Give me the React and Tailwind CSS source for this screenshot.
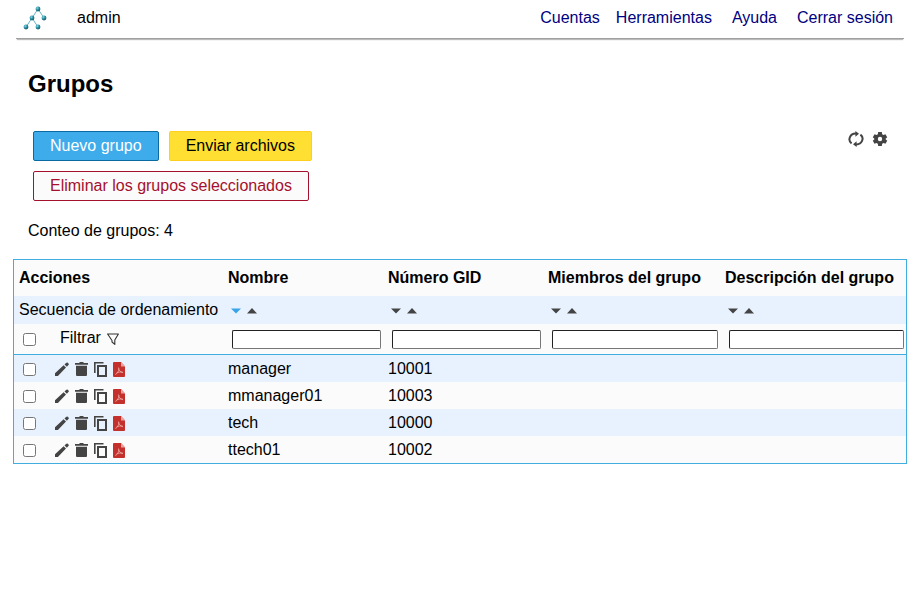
const menu = ['Cuentas', 'Herramientas', 'Ayuda', 'Cerrar sesión'];

const columns = [
  { id: 'cn', label: 'Nombre', active: true },
  { id: 'gid', label: 'Número GID' },
  { id: 'members', label: 'Miembros del grupo' },
  { id: 'description', label: 'Descripción del grupo' },
];

const groups = [
  { name: 'manager', gid: '10001' },
  { name: 'mmanager01', gid: '10003' },
  { name: 'tech', gid: '10000' },
  { name: 'ttech01', gid: '10002' },
];

function Logo() {
  const nodes = [[15, 4], [9, 13], [21, 13], [3, 22], [15, 22]];
  return (
    <svg width="24" height="26" viewBox="0 0 24 26" aria-hidden="true">
      <defs>
        <radialGradient id="ball" cx="0.35" cy="0.3" r="0.8">
          <stop offset="0" stopColor="#8fd8e2" />
          <stop offset="0.45" stopColor="#2d93a5" />
          <stop offset="1" stopColor="#0c4657" />
        </radialGradient>
      </defs>
      <path d="M15 4 3 22M15 4l6 9M9 13l6 9" stroke="#68b3c2" strokeWidth="1" fill="none" />
      {nodes.map(([x, y]) => (
        <circle key={`${x}-${y}`} cx={x} cy={y} r="2.4" fill="url(#ball)" />
      ))}
    </svg>
  );
}

function RefreshIcon() {
  return (
    <svg width="16" height="16" viewBox="0 0 16 16" fill="none" stroke="#444" strokeWidth="2" aria-hidden="true">
      <path d="M3.600 12.400A6.200 5.600 0 0 1 8 2.600" />
      <path d="M12.400 3.600A6.200 5.600 0 0 1 8 13.400" />
      <path d="M7.400 0 11 2.800 7.400 5.800ZM8.600 10.200 5 13.200 8.600 16Z" fill="#444" stroke="none" />
    </svg>
  );
}

function GearIcon() {
  return (
    <svg width="16" height="16" viewBox="1 1 22 22" fill="#444" aria-hidden="true">
      <path
        fillRule="evenodd"
        d="M9.5 2.500h5l.5 3 1.7 1 2.800-1 2.400 4.200-2.200 1.900v.8l2.200 1.900-2.400 4.200-2.800-1-1.700 1-.5 3h-5l-.5-3-1.700-1-2.800 1L2.100 14.300l2.200-1.900v-.8L2.100 9.700l2.400-4.200 2.800 1 1.700-1ZM12 9a3 3 0 1 0 0 6 3 3 0 0 0 0-6Z"
      />
    </svg>
  );
}

function SortIcon({ up, active }) {
  return (
    <svg width="10" height="6" viewBox="0 0 10 6" fill={active ? '#36a3eb' : '#444'} aria-hidden="true">
      <path d={up ? 'M5 0 10 5.500H0Z' : 'M0 .5H10L5 5.500Z'} />
    </svg>
  );
}

function FilterIcon() {
  return (
    <svg width="12" height="12" viewBox="0 0 12 12" fill="none" stroke="#333" strokeWidth="1.100" strokeLinejoin="round" aria-hidden="true">
      <path d="M.6 1H11.400L7.800 7V11.400L5 9V7.500Z" />
    </svg>
  );
}

function EditIcon() {
  return (
    <svg width="14" height="14" viewBox="0 0 14 14" fill="#444" aria-hidden="true">
      <path d="M0 14V11.200L8.600 3.200 11 5.600 2.900 14ZM9.500 2.400 11 .9Q12 0 12.800.7L13.500 1.400Q14.200 2.200 13.400 3.100L11.900 4.700Z" />
    </svg>
  );
}

function TrashIcon() {
  return (
    <svg width="13" height="14" viewBox="0 0 13 14" fill="#444" aria-hidden="true">
      <path d="M4.500 0h4v1H13v1.700H0V1h4.500ZM1 3.700h11V13Q12 14 11 14H2Q1 14 1 13Z" />
    </svg>
  );
}

function CopyIcon() {
  return (
    <svg width="13" height="15" viewBox="0 0 13 15" fill="none" stroke="#444" aria-hidden="true">
      <path d="M.8 11V.8H9.500" strokeWidth="1.600" />
      <path d="M4 4H12V14H4Z" strokeWidth="2" />
    </svg>
  );
}

function PdfIcon() {
  return (
    <svg width="12" height="15" viewBox="0 0 12 15" aria-hidden="true">
      <path d="M1 0H8L12 4.500V14Q12 15 11 15H1Q0 15 0 14V1Q0 0 1 0Z" fill="#c4302b" />
      <path d="M8 0 12 4.500H8Z" fill="#eba39f" />
      <path d="M5.500 5.500C6 8.500 7 10 10 10.500M5.800 6.500C5.600 9.500 4.500 11.500 2.300 12.500M3.500 11C5.500 10 7.500 9.800 9.800 10.300" stroke="#f1bcb9" strokeWidth=".7" fill="none" />
    </svg>
  );
}

const box = 'block size-[13px] shrink-0';

export default function App() {
  return (
    <div className="bg-white font-['Liberation_Sans',Arial,sans-serif] text-base leading-[18px] text-black">
      <header className="mx-4 flex h-[39px] items-start justify-between border-b border-[#a0a0a0] pr-[11px] pl-[7px] shadow-[0_2px_1px_-1px_#bbb]">
        <div className="flex items-start pt-[5px]">
          <Logo />
          <span className="ml-[30px] pt-1">admin</span>
        </div>
        <nav className="flex pt-[9px] text-[#000080]">
          {menu.map((item) => (
            <a key={item} href="#" className="ml-4 whitespace-nowrap nth-[3]:ml-5 nth-[4]:ml-5">{item}</a>
          ))}
        </nav>
      </header>

      <main className="px-[13px]">
        <h1 className="mt-[31px] ml-[15px] text-2xl leading-7 font-bold">Grupos</h1>

        <div className="mt-[33px] flex items-start justify-between pr-[19px] pl-5">
          <div className="flex max-w-[320px] flex-wrap gap-[10px]">
            <button className="h-[30px] rounded-[2px] border border-[#0b6aa2] bg-[#3eaceb] px-4 text-white">Nuevo grupo</button>
            <button className="h-[30px] rounded-[2px] border border-[#ffcf1f] bg-[#ffe032] px-4">Enviar archivos</button>
            <button className="h-[30px] rounded-[2px] border border-[#a5102c] bg-[#fbfbfb] px-4 text-[#a5102c]">Eliminar los grupos seleccionados</button>
          </div>
          <div className="flex gap-2">
            <button aria-label="Refrescar"><RefreshIcon /></button>
            <button aria-label="Ajustes"><GearIcon /></button>
          </div>
        </div>

        <p className="mt-[21px] ml-[15px]">Conteo de grupos: 4</p>

        <table className="mt-[19px] w-full table-fixed border-separate border-spacing-0 border border-[#42aee0] text-left">
          <colgroup>
            <col className="w-[209px]" />
            <col className="w-[160px]" />
            <col className="w-[160px]" />
            <col className="w-[177px]" />
            <col />
          </colgroup>
          <thead>
            <tr className="h-9 bg-[#fbfbfb]">
              <th className="px-[5px] py-0">Acciones</th>
              {columns.map((c) => (
                <th key={c.id} className="px-[5px] py-0 whitespace-nowrap">{c.label}</th>
              ))}
            </tr>
            <tr className="h-7 bg-[#e8f2ff]">
              <td className="px-[5px] py-0 whitespace-nowrap">Secuencia de ordenamiento</td>
              {columns.map((c) => (
                <td key={c.id} className="px-2 py-0">
                  <div className="flex gap-[6px] pt-[2px]">
                    <button aria-label={`${c.label}: descendente`}><SortIcon active={c.active} /></button>
                    <button aria-label={`${c.label}: ascendente`}><SortIcon up /></button>
                  </div>
                </td>
              ))}
            </tr>
            <tr className="h-[31px] bg-[#fbfbfb]">
              <td className="border-b border-[#42aee0] p-0 pl-[9px]">
                <div className="flex items-center">
                  <input type="checkbox" aria-label="Seleccionar todos" className={box} />
                  <button className="ml-[24px] flex items-center gap-[6px] pb-[2px]">
                    Filtrar
                    <span className="pt-[2px]"><FilterIcon /></span>
                  </button>
                </div>
              </td>
              {columns.map((c) => (
                <td key={c.id} className="border-b border-[#42aee0] p-0 pr-[2px] pl-[9px]">
                  <input
                    type="text"
                    aria-label={`Filtrar ${c.label}`}
                    className="block h-[19px] w-full rounded-[2px] border border-t-[#222] border-r-[#767676] border-b-[#767676] border-l-[#222] bg-white px-1 text-sm"
                  />
                </td>
              ))}
            </tr>
          </thead>
          <tbody>
            {groups.map((g) => (
              <tr key={g.name} className="h-[27px] odd:bg-[#e8f2ff] even:bg-[#fbfbfb]">
                <td className="p-0 pl-[9px]">
                  <div className="flex items-center pt-px">
                    <input type="checkbox" aria-label={`Seleccionar ${g.name}`} className={box} />
                    <div className="ml-[19px] flex items-center gap-[6px]">
                      <button aria-label="Editar"><EditIcon /></button>
                      <button aria-label="Eliminar"><TrashIcon /></button>
                      <button aria-label="Copiar"><CopyIcon /></button>
                      <button aria-label="PDF"><PdfIcon /></button>
                    </div>
                  </div>
                </td>
                <td className="px-[5px] py-0">{g.name}</td>
                <td className="px-[5px] py-0">{g.gid}</td>
                <td />
                <td />
              </tr>
            ))}
          </tbody>
        </table>
      </main>
    </div>
  );
}
